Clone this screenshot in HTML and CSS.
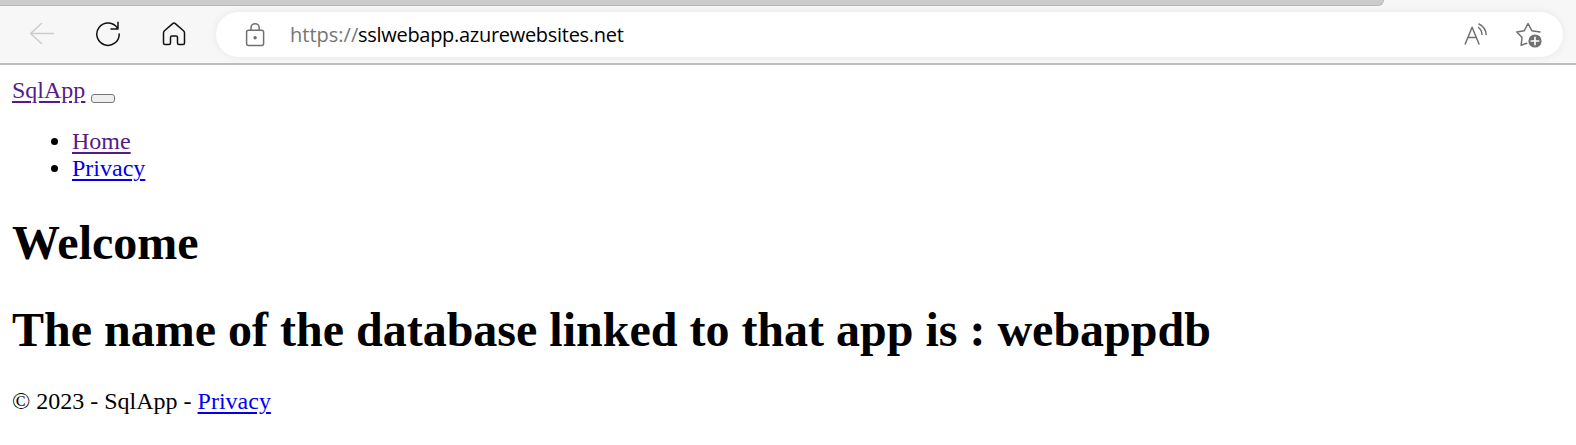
FILE: index.html
```html
<!DOCTYPE html>
<html lang="en">
<head>
<meta charset="utf-8">
<title>Home page - SqlApp</title>
<link rel="stylesheet" href="styles.css">
</head>
<body>
<div class="tabs"><div class="tab-strip"></div></div>
<div class="toolbar">
  <svg class="icon back" viewBox="0 0 26 26"><path d="M24.500 12.500H1.500M12.500 2.500L1.500 12.500L12.500 22.500"/></svg>
  <svg class="icon reload" viewBox="0 0 26 26"><path d="M22.500 7.200A11.200 11.200 0 1 0 24.200 13M23 1.200V8.100H16"/></svg>
  <svg class="icon home" viewBox="0 0 26 26"><path d="M12 2.400Q13 1.500 14 2.400L22.500 9.800Q23.500 10.800 23.500 12V22Q23.500 23.500 22 23.500H18Q16.500 23.500 16.500 22V16.500Q16.500 15 15 15H11Q9.500 15 9.500 16.500V22Q9.500 23.500 8 23.500H4Q2.500 23.500 2.500 22V12Q2.500 10.800 3.500 9.800Z"/></svg>
  <div class="address">
    <svg class="icon lock" viewBox="0 0 26 26"><rect x="4.600" y="8.300" width="17" height="15.200" rx="2"/><path d="M9 8V5.800a4.100 4.100 0 0 1 8.200 0V8"/><circle class="solid" cx="13.100" cy="15.700" r="1.700"/></svg>
    <div class="url"><span class="scheme">https://</span><span class="host">sslwebapp.azurewebsites.net</span></div>
    <svg class="icon read" viewBox="0 0 26 26"><path d="M2.200 22L9.100 5.200L16 22M4.800 15.600H13.400M15.500 5.500Q18.800 8 19 12.500M16 2Q22.700 5.500 23.200 12.500"/></svg>
    <svg class="icon star" viewBox="0 0 28 28"><path d="M11.700 22.300L6.100 24.200L7.100 16.500L1.800 11L9.300 9.700L13 2.500L16.800 9.700L25 11"/><circle class="solid" cx="20" cy="20" r="6.600"/><path class="plus" d="M20 16.200V23.800M16.200 20H23.800"/></svg>
  </div>
</div>
<main class="page">
  <header class="navbar"><a class="visited" href="#">SqlApp</a> <button class="toggler" aria-label="Toggle navigation"></button></header>
  <ul class="menu">
    <li><a class="visited" href="#">Home</a></li>
    <li><a href="#">Privacy</a></li>
  </ul>
  <h1 class="welcome">Welcome</h1>
  <h1 class="database">The name of the database linked to that app is : webappdb</h1>
  <footer class="footer">© 2023 - SqlApp - <a href="#">Privacy</a></footer>
</main>
</body>
</html>
```
FILE: styles.css
```css
body {
  margin: 0;
  background: #fff;
  color: #000;
  font: 24px/27px "Liberation Serif", serif;
}
.tabs {
  height: 6px;
  background: #f7f7f7;
}
.tab-strip {
  box-sizing: border-box;
  width: 1384px;
  height: 6px;
  background: #ccc;
  border-bottom: 1px solid #b8b8b8;
  border-right: 1px solid #b8b8b8;
  border-bottom-right-radius: 6px;
}
.toolbar {
  box-sizing: border-box;
  height: 59px;
  padding: 6px 13px 0 29px;
  display: flex;
  align-items: flex-start;
  background: #f7f7f7;
  border-bottom: 2px solid #bdbdbd;
}
.icon {
  width: 26px;
  height: 26px;
  flex: none;
  fill: none;
  stroke: #111;
  stroke-width: 1.5;
  stroke-linecap: round;
  stroke-linejoin: round;
}
.back { margin-top: 9px; stroke: #ccc; }
.reload { margin: 9px 0 0 40px; }
.home { margin: 9px 0 0 40px; }
.address {
  box-sizing: border-box;
  flex: 1;
  height: 45px;
  margin-left: 29px;
  padding: 0 20px 0 26px;
  display: flex;
  align-items: center;
  background: #fff;
  border-radius: 23px;
  box-shadow: 0 0 8px rgba(0, 0, 0, .07);
}
.address .icon { stroke: #707070; }
.icon .solid { fill: #707070; stroke: none; }
.icon .plus { stroke: #fff; stroke-width: 1.6; }
.url {
  flex: 1;
  display: flex;
  margin-left: 22px;
  font: 20px/30px "Open Sans", "Noto Sans", sans-serif;
  white-space: nowrap;
}
.scheme { width: 68px; color: #767676; }
.host { letter-spacing: -.29px; }
.address .read { margin-right: 26px; }
.address .star { width: 28px; height: 28px; }
.page { padding: 12px; }
a {
  color: #00e;
  text-decoration-thickness: 2px;
  text-underline-offset: 3px;
}
a.visited { color: #551a8b; }
.toggler {
  box-sizing: border-box;
  width: 24px;
  height: 9px;
  padding: 0;
  background: #efefef;
  border: 1px solid #767676;
  border-radius: 3px;
  vertical-align: -4px;
}
.menu { margin: 24px 0 0; padding-left: 60px; }
.welcome, .database {
  margin: 33px 0 31px;
  font-size: 48px;
  line-height: 55px;
  white-space: nowrap;
}
.database { margin-top: 32px; }
```
